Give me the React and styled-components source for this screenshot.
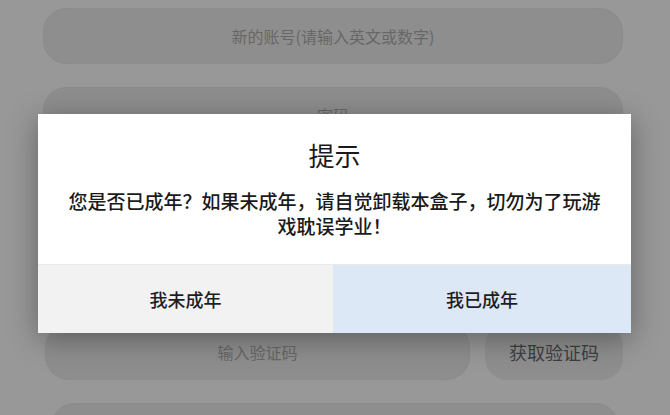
import React from 'react';
import styled, { createGlobalStyle } from 'styled-components';

const GlobalStyle = createGlobalStyle`
  html, body {
    margin: 0;
    padding: 0;
    background: #989898;
    font-family: "Noto Sans CJK SC", "Noto Sans", sans-serif;
  }
`;

function App() {
  return (
    <Screen>
      <GlobalStyle />
      <Form>
        <Field>新的账号(请输入英文或数字)</Field>
        <Field>密码</Field>
        {/* these two sit fully under the dialog */}
        <Field />
        <Field />
        <CodeRow>
          <Field>输入验证码</Field>
          <CodeButton>获取验证码</CodeButton>
        </CodeRow>
        <Field inset />
      </Form>

      <Dialog>
        <DialogBody>
          <Title>提示</Title>
          <Message>您是否已成年？如果未成年，请自觉卸载本盒子，切勿为了玩游戏耽误学业！</Message>
        </DialogBody>
        <Actions>
          <Action>我未成年</Action>
          <Action primary>我已成年</Action>
        </Actions>
      </Dialog>
    </Screen>
  );
}

const Screen = styled.div`
  position: relative;
  width: 670px;
  height: 415px;
  overflow: hidden;
  background: #989898;
`;

const Form = styled.div`
  display: flex;
  flex-direction: column;
  gap: 23px;
  padding: 8px 47px 0 43px;
`;

const Field = styled.div`
  flex: none;
  height: 56px;
  margin: ${p => (p.inset ? '0 4px 0 8px' : '0')};
  border-radius: 24px;
  background: #8e8e8e;
  box-shadow: inset 0 0 2px rgba(0, 0, 0, 0.06);
  display: flex;
  align-items: center;
  justify-content: center;
  color: #676767;
  font-size: 16px;
`;

const CodeRow = styled.div`
  display: grid;
  grid-template-columns: 1fr 138px;
  gap: 15px;
  padding-left: 2px;
`;

const CodeButton = styled.div`
  height: 56px;
  border-radius: 22px;
  background: #8e8e8e;
  display: flex;
  align-items: center;
  justify-content: center;
  color: #3f3f3f;
  font-size: 18px;
`;

const Dialog = styled.div`
  position: absolute;
  left: 38px;
  top: 114px;
  width: 593px;
  background: #fff;
  box-shadow: 0 6px 28px rgba(0, 0, 0, 0.35);
  display: flex;
  flex-direction: column;
`;

const DialogBody = styled.div`
  padding: 24px 24px 26px;
  text-align: center;
`;

const Title = styled.div`
  font-size: 26px;
  line-height: 34px;
  color: #1a1a1a;
  margin-bottom: 16px;
`;

const Message = styled.div`
  font-size: 19px;
  line-height: 25px;
  color: #1a1a1a;
  font-weight: 500;
`;

const Actions = styled.div`
  display: grid;
  grid-template-columns: 295px 1fr;
  height: 68px;
  border-top: 1px solid #e9e9e9;
`;

const Action = styled.div`
  display: flex;
  align-items: center;
  justify-content: center;
  background: ${p => (p.primary ? '#dce8f5' : '#f2f2f2')};
  color: #1e1e1e;
  font-size: 18px;
  font-weight: 500;
`;

export default App;
